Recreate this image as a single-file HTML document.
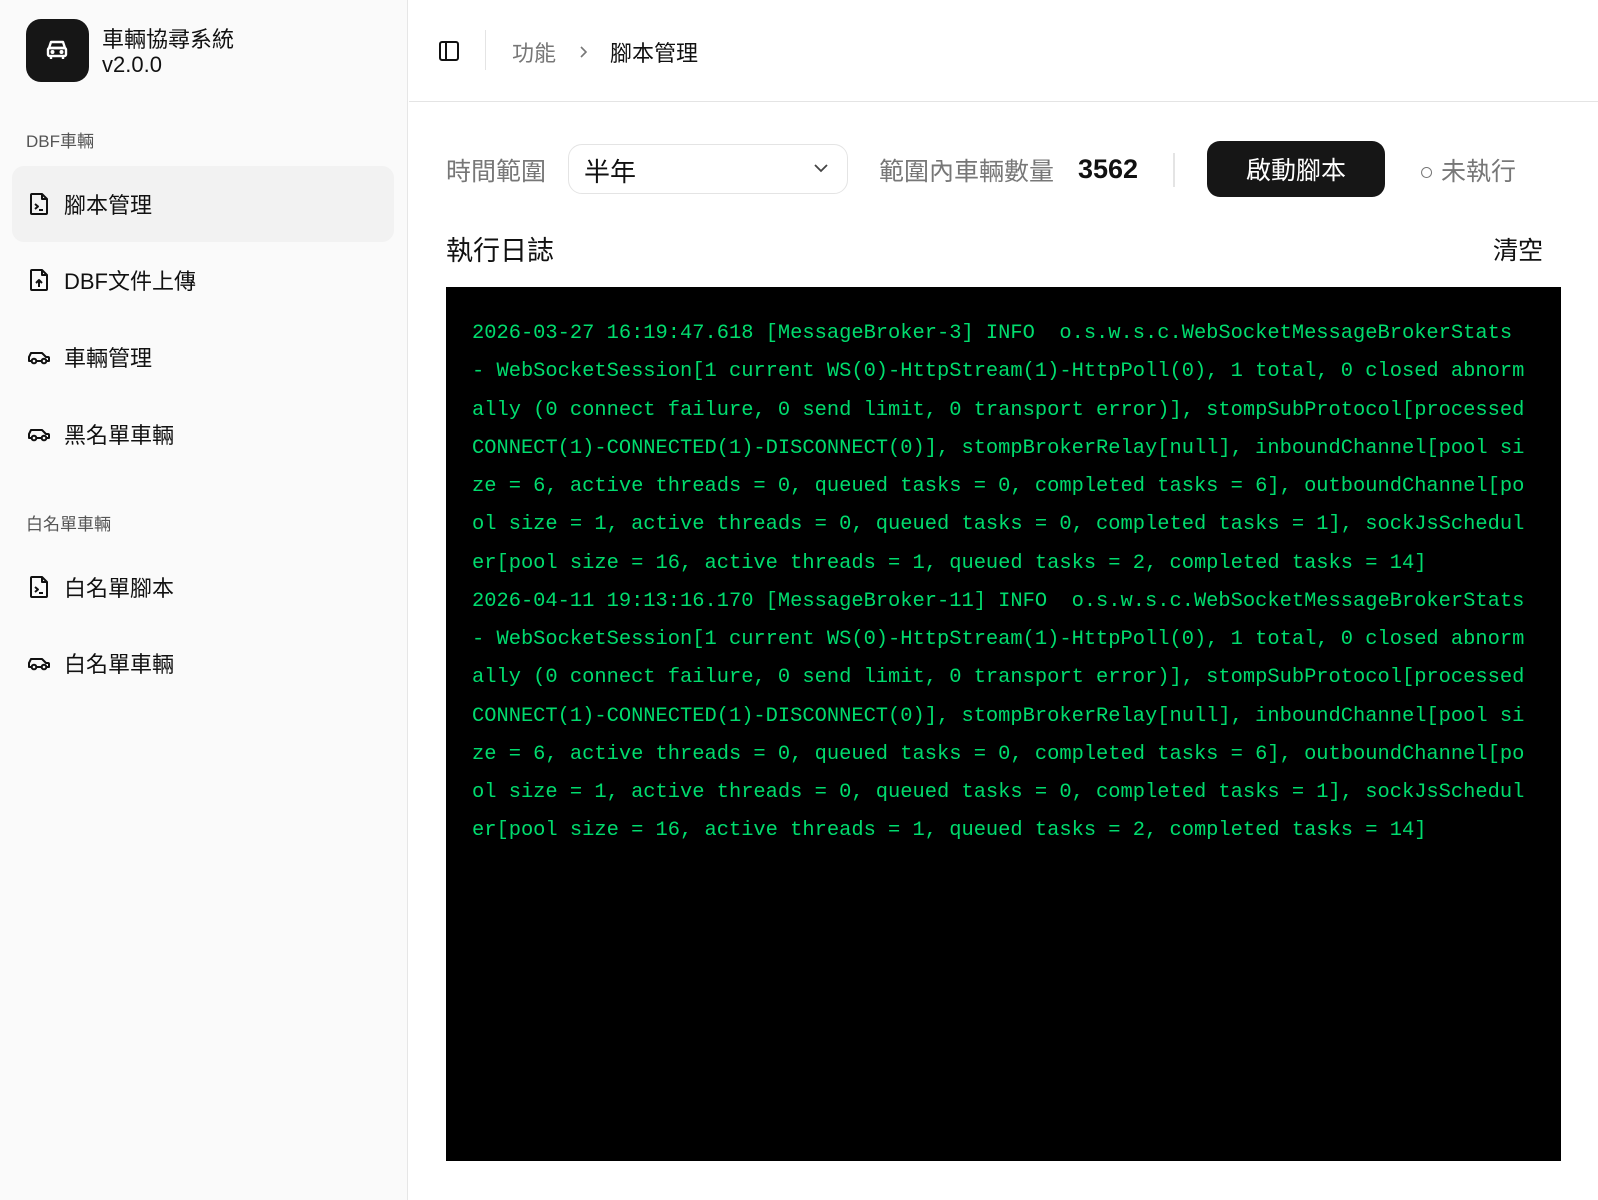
<!DOCTYPE html>
<html><head><meta charset="utf-8">
<style>
*{box-sizing:border-box;margin:0;padding:0}
body{width:1598px;height:1200px;overflow:hidden;background:#fff;font-family:"Liberation Sans","Noto Sans CJK TC",sans-serif;color:#111;position:relative}
.side{position:absolute;left:0;top:0;width:408px;height:1200px;background:#fafafa;border-right:1px solid #e6e6e6}
.logo{position:absolute;left:26px;top:19px;width:63px;height:63px;background:#161616;border-radius:15px}
.logo svg{position:absolute;left:19px;top:20px}
.t1{position:absolute;left:102px;top:26px;font-size:22px;line-height:28px}
.t2{position:absolute;left:102px;top:51px;font-size:22px;line-height:28px}
.grp{position:absolute;left:26px;font-size:17px;color:#555}
.item{position:absolute;left:12px;width:382px;height:76px;border-radius:12px;font-size:22px;display:flex;align-items:center;padding-left:16px}
.item svg{margin-right:14px}
.item.act{background:#f2f2f2}
.hdr{position:absolute;left:409px;top:0;right:0;height:102px;border-bottom:1px solid #e4e4e4}
.abs{position:absolute}
.term{position:absolute;left:446px;top:287px;width:1115px;height:874px;background:#000}
.log{position:absolute;left:472px;top:315px;font-family:"Liberation Mono",monospace;font-size:20.4px;line-height:38.25px;color:#00dc6e;white-space:pre}
</style></head><body>
<div class="side">
 <div class="logo"><svg width="24" height="22" viewBox="0 0 24 22" fill="none" stroke="#fff" stroke-width="2.4" stroke-linejoin="round"><path d="M6 3h12l2 6H4z"/><rect x="3" y="9" width="18" height="8" rx="1.5"/><path d="M6 17v3M18 17v3"/><circle cx="7.5" cy="13" r=".8" fill="#fff"/><circle cx="16.5" cy="13" r=".8" fill="#fff"/></svg></div>
 <div class="t1">車輛協尋系統</div>
 <div class="t2">v2.0.0</div>
 <div class="grp" style="top:127px">DBF車輛</div>
 <div class="item act" style="top:166px"><svg width="22" height="24" viewBox="0 0 22 24" fill="none" stroke="#111" stroke-width="2" stroke-linejoin="round"><path d="M4 2h10l5 5v14a1 1 0 0 1-1 1H4a1 1 0 0 1-1-1V3a1 1 0 0 1 1-1z"/><path d="M14 2v5h5"/><path d="M7 12l3 2.5L7 17M11 18h4"/></svg>腳本管理</div>
 <div class="item" style="top:242px"><svg width="22" height="24" viewBox="0 0 22 24" fill="none" stroke="#111" stroke-width="2" stroke-linejoin="round"><path d="M4 2h10l5 5v14a1 1 0 0 1-1 1H4a1 1 0 0 1-1-1V3a1 1 0 0 1 1-1z"/><path d="M14 2v5h5"/><path d="M11 19v-7M8 15l3-3 3 3"/></svg>DBF文件上傳</div>
 <div class="item" style="top:319px"><svg width="22" height="22" viewBox="1 0 22 22" fill="none" stroke="#111" stroke-width="2" stroke-linejoin="round"><path d="M4 15H2v-4l2-4h11l4 4h2a1 1 0 0 1 1 1v3h-2"/><circle cx="7" cy="15" r="2.3"/><circle cx="17" cy="15" r="2.3"/><path d="M9.5 15h5"/></svg>車輛管理</div>
 <div class="item" style="top:396px"><svg width="22" height="22" viewBox="1 0 22 22" fill="none" stroke="#111" stroke-width="2" stroke-linejoin="round"><path d="M4 15H2v-4l2-4h11l4 4h2a1 1 0 0 1 1 1v3h-2"/><circle cx="7" cy="15" r="2.3"/><circle cx="17" cy="15" r="2.3"/><path d="M9.5 15h5"/></svg>黑名單車輛</div>
 <div class="grp" style="top:510px">白名單車輛</div>
 <div class="item" style="top:549px"><svg width="22" height="24" viewBox="0 0 22 24" fill="none" stroke="#111" stroke-width="2" stroke-linejoin="round"><path d="M4 2h10l5 5v14a1 1 0 0 1-1 1H4a1 1 0 0 1-1-1V3a1 1 0 0 1 1-1z"/><path d="M14 2v5h5"/><path d="M7 12l3 2.5L7 17M11 18h4"/></svg>白名單腳本</div>
 <div class="item" style="top:625px"><svg width="22" height="22" viewBox="1 0 22 22" fill="none" stroke="#111" stroke-width="2" stroke-linejoin="round"><path d="M4 15H2v-4l2-4h11l4 4h2a1 1 0 0 1 1 1v3h-2"/><circle cx="7" cy="15" r="2.3"/><circle cx="17" cy="15" r="2.3"/><path d="M9.5 15h5"/></svg>白名單車輛</div>
</div>
<div class="hdr">
 <svg class="abs" style="left:29px;top:40px" width="22" height="22" viewBox="0 0 22 22" fill="none" stroke="#111" stroke-width="2"><rect x="2" y="2" width="18" height="18" rx="2"/><path d="M8 2v18"/></svg>
 <div class="abs" style="left:76px;top:30px;width:1px;height:40px;background:#e4e4e4"></div>
 <div class="abs" style="left:103px;top:36px;font-size:22px;color:#777">功能</div>
 <svg class="abs" style="left:169px;top:45px" width="12" height="14" viewBox="0 0 12 14" fill="none" stroke="#777" stroke-width="1.6"><path d="M3 2l5 5-5 5"/></svg>
 <div class="abs" style="left:201px;top:36px;font-size:22px">腳本管理</div>
</div>
<div class="abs" style="left:446px;top:152px;font-size:25px;color:#777">時間範圍</div>
<div class="abs" style="left:568px;top:144px;width:280px;height:50px;border:1px solid #e4e4e4;border-radius:14px"></div>
<div class="abs" style="left:584px;top:152px;font-size:26px">半年</div>
<svg class="abs" style="left:813px;top:162px" width="16" height="12" viewBox="0 0 16 12" fill="none" stroke="#444" stroke-width="1.8"><path d="M2 3l6 6 6-6"/></svg>
<div class="abs" style="left:879px;top:152px;font-size:25px;color:#777">範圍內車輛數量</div>
<div class="abs" style="left:1078px;top:154px;font-size:27px;font-weight:bold">3562</div>
<div class="abs" style="left:1173px;top:153px;width:2px;height:34px;background:#e4e4e4"></div>
<div class="abs" style="left:1207px;top:141px;width:178px;height:56px;background:#161616;border-radius:13px;color:#fff;font-size:25px;display:flex;align-items:center;justify-content:center">啟動腳本</div>
<div class="abs" style="left:1419px;top:152px;font-size:25px;color:#777">○ 未執行</div>
<div class="abs" style="left:446px;top:229px;font-size:27px">執行日誌</div>
<div class="abs" style="left:1493px;top:231px;font-size:25px">清空</div>
<div class="term"></div>
<div class="log">2026-03-27 16:19:47.618 [MessageBroker-3] INFO  o.s.w.s.c.WebSocketMessageBrokerStats
- WebSocketSession[1 current WS(0)-HttpStream(1)-HttpPoll(0), 1 total, 0 closed abnorm
ally (0 connect failure, 0 send limit, 0 transport error)], stompSubProtocol[processed
CONNECT(1)-CONNECTED(1)-DISCONNECT(0)], stompBrokerRelay[null], inboundChannel[pool si
ze = 6, active threads = 0, queued tasks = 0, completed tasks = 6], outboundChannel[po
ol size = 1, active threads = 0, queued tasks = 0, completed tasks = 1], sockJsSchedul
er[pool size = 16, active threads = 1, queued tasks = 2, completed tasks = 14]
2026-04-11 19:13:16.170 [MessageBroker-11] INFO  o.s.w.s.c.WebSocketMessageBrokerStats
- WebSocketSession[1 current WS(0)-HttpStream(1)-HttpPoll(0), 1 total, 0 closed abnorm
ally (0 connect failure, 0 send limit, 0 transport error)], stompSubProtocol[processed
CONNECT(1)-CONNECTED(1)-DISCONNECT(0)], stompBrokerRelay[null], inboundChannel[pool si
ze = 6, active threads = 0, queued tasks = 0, completed tasks = 6], outboundChannel[po
ol size = 1, active threads = 0, queued tasks = 0, completed tasks = 1], sockJsSchedul
er[pool size = 16, active threads = 1, queued tasks = 2, completed tasks = 14]</div>
</body></html>
